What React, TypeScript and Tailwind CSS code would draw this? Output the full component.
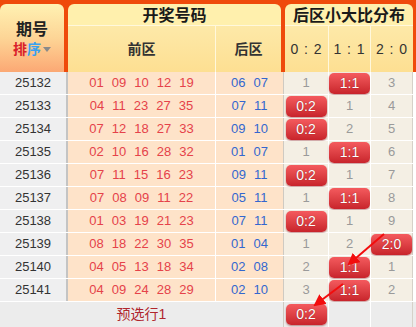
import React from "react"

type Ratio = number | string

const rows: [string, string[], string[], Ratio[]][] = [
    ["25132", ["01", "09", "10", "12", "19"], ["06", "07"], [1, "1:1", 3]],
    ["25133", ["04", "11", "23", "27", "35"], ["07", "11"], ["0:2", 1, 4]],
    ["25134", ["07", "12", "18", "27", "33"], ["09", "10"], ["0:2", 2, 5]],
    ["25135", ["02", "10", "16", "28", "32"], ["01", "07"], [1, "1:1", 6]],
    ["25136", ["07", "11", "15", "16", "23"], ["09", "11"], ["0:2", 1, 7]],
    ["25137", ["07", "08", "09", "11", "22"], ["05", "11"], [1, "1:1", 8]],
    ["25138", ["01", "03", "19", "21", "23"], ["07", "11"], ["0:2", 1, 9]],
    ["25139", ["08", "18", "22", "30", "35"], ["01", "04"], [1, 2, "2:0"]],
    ["25140", ["04", "05", "13", "18", "34"], ["02", "08"], [2, "1:1", 1]],
    ["25141", ["04", "09", "24", "28", "29"], ["02", "10"], [3, "1:1", 2]],
]

const ratioWidths = ["w-[45px] border-l border-l-[#cfcac2]", "w-[42px] border-l border-l-white", "w-[43px] border-l border-l-white border-r border-r-[#d6d1c8]"]

const Badge: React.FC<{ label: string }> = ({ label }) => (
    <div className="w-[41px] h-[21px] rounded-[5px] bg-gradient-to-b from-[#f45a5e] to-[#c8232b] shadow-[0_1px_2px_rgba(120,0,0,0.45)] flex items-center justify-center text-white text-[14px] [text-shadow:0_0_1px_rgba(80,0,0,0.6)]">
        {label}
    </div>
)

const App: React.FC = () => {
    return (
        <div className="relative w-[416px] h-[327px] overflow-hidden bg-white font-['Liberation_Sans','Noto_Sans_CJK_SC',sans-serif]">
            {/* header */}
            <div className="flex h-[72px] pt-[4px] pr-[3px] gap-[4px] bg-[#ef4a0b]">
                <div className="w-[64px] rounded-t-[6px] bg-gradient-to-b from-[#fff1b2] via-[#fdd596] to-[#fba874] flex flex-col items-center pt-[16px]">
                    <div className="text-[16px] font-bold text-[#222] leading-[20px]">期号</div>
                    <div className="flex items-center text-[14px] font-bold leading-[18px]">
                        <span className="text-[#d9202a]">排</span>
                        <span className="text-[#3aa2f0]">序</span>
                        <span className="ml-[2px] w-0 h-0 border-x-[4px] border-x-transparent border-t-[5px] border-t-[#8a8a8a]" />
                    </div>
                </div>
                <div className="w-[213px] rounded-t-[6px] overflow-hidden flex flex-col">
                    <div className="h-[21px] bg-[#fff0ad] flex items-center justify-center text-[16px] font-bold text-[#1a1a1a] pt-[2px]">
                        开奖号码
                    </div>
                    <div className="h-[47px] border-t border-t-[#fff8dc] bg-gradient-to-b from-[#fde9a8] to-[#fddf92] flex text-[14px] font-bold text-[#333]">
                        <div className="w-[147px] flex items-center justify-center">前区</div>
                        <div className="flex-1 border-l border-l-[#fff8dc] flex items-center justify-center">后区</div>
                    </div>
                </div>
                <div className="w-[128px] rounded-t-[6px] overflow-hidden flex flex-col">
                    <div className="h-[21px] bg-[#fff0ad] flex items-center justify-center text-[16px] font-bold text-[#1a1a1a] pt-[2px]">
                        后区小大比分布
                    </div>
                    <div className="h-[47px] border-t border-t-[#fff8dc] bg-gradient-to-b from-[#fde9a8] to-[#fddf92] flex text-[14px] text-[#333] tracking-[1px]">
                        <div className="w-[43px] flex items-center justify-center">0 : 2</div>
                        <div className="w-[42px] border-l border-l-[#fff8dc] flex items-center justify-center">1 : 1</div>
                        <div className="flex-1 border-l border-l-[#fff8dc] flex items-center justify-center">2 : 0</div>
                    </div>
                </div>
            </div>

            {/* data rows */}
            <div className="flex flex-col">
                {rows.map(([period, front, back, ratio]) => (
                    <div key={period} className="flex h-[23px] border-b border-b-white text-[13px]">
                        <div className="w-[68px] bg-[#efeff0] border-r-2 border-r-[#c4c4c4] flex items-center justify-center text-[#333]">
                            {period}
                        </div>
                        <div className="w-[147px] bg-[#fee3c9] flex items-center justify-center gap-[8px] text-[#e5424a]">
                            {front.map((n, i) => (
                                <span key={i}>{n}</span>
                            ))}
                        </div>
                        <div className="w-[68px] bg-[#fee3c9] border-l border-l-white flex items-center justify-center gap-[8px] text-[#3367cf]">
                            {back.map((n, i) => (
                                <span key={i}>{n}</span>
                            ))}
                        </div>
                        {ratio.map((r, i) => (
                            <div key={i} className={`${ratioWidths[i]} bg-[#f4efe4] flex items-center justify-center text-[#9a9a9a]`}>
                                {typeof r === "string" ? <Badge label={r} /> : r}
                            </div>
                        ))}
                    </div>
                ))}

                {/* footer */}
                <div className="flex h-[25px] bg-[#ececec]">
                    <div className="w-[68px]" />
                    <div className="w-[147px] flex items-center justify-center text-[14px] text-[#b0262c]">预选行1</div>
                    <div className="w-[68px]" />
                    <div className={`${ratioWidths[0]} flex items-center justify-center`}>
                        <Badge label="0:2" />
                    </div>
                    <div className={ratioWidths[1]} />
                    <div className={ratioWidths[2]} />
                </div>
            </div>

            {/* trend arrows */}
            <svg className="absolute inset-0 pointer-events-none" width="416" height="327">
                <defs>
                    <marker id="ah" markerWidth="6" markerHeight="6" refX="5" refY="3" orient="auto" markerUnits="strokeWidth">
                        <path d="M0,0 L6,3 L0,6 Z" fill="#f20d0d" />
                    </marker>
                </defs>
                <line x1="384" y1="234" x2="349" y2="264" stroke="#f20d0d" strokeWidth="2" markerEnd="url(#ah)" />
                <line x1="343" y1="284" x2="315" y2="305" stroke="#f20d0d" strokeWidth="2" markerEnd="url(#ah)" />
            </svg>
        </div>
    )
}

export default App
